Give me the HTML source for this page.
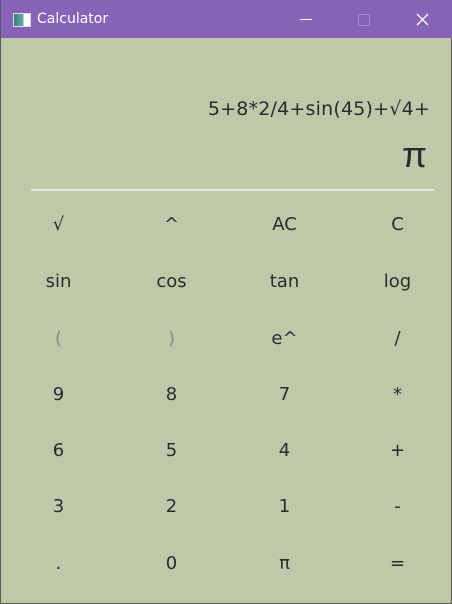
<!DOCTYPE html>
<html><head><style>
html,body{margin:0;padding:0}
body{width:452px;height:604px;background:#bfc9a9;position:relative;overflow:hidden;font-family:"DejaVu Sans","Liberation Sans",sans-serif;box-sizing:border-box;border:1px solid #5a5a5a;border-top:none}
.tb{position:absolute;left:0;top:0;width:452px;height:38px;background:#8763b8;color:#fff}
.tb .t{position:absolute;left:36px;top:11px;font-size:14px}
.ic{position:absolute;left:12px;top:13px;width:16px;height:12px;background:linear-gradient(90deg,#3a7a8a,#6ab0a0 60%,#fff 60%);border:1px solid #ddd}
.b{position:absolute;width:113px;height:40px;text-align:center;line-height:40px;font-size:18px;color:#2b2b2b;transform:translate(-57px,-19px)}
.g{color:#858b78}
.e1{position:absolute;right:21px;top:98px;font-size:19px;letter-spacing:0.2px;color:#2b2b2b}
.e2{position:absolute;right:24px;top:134px;font-size:36px;font-family:"Liberation Sans",sans-serif;color:#2b2b2b}
.ln{position:absolute;left:30px;top:189px;width:403px;height:2px;background:#e6e8e0}
</style></head><body>
<div class="tb"><div class="ic"></div><div class="t">Calculator</div>
<div style="position:absolute;left:299px;top:19px;width:12px;height:1px;background:#fff"></div>
<div style="position:absolute;left:357px;top:14px;width:10px;height:10px;border:1px solid #a58ad0"></div>
<svg style="position:absolute;left:415px;top:13px" width="13" height="13"><path d="M1 1L12 12M12 1L1 12" stroke="#fff" stroke-width="1.3"/></svg>
</div>
<div class="e1">5+8*2/4+sin(45)+√4+</div>
<div class="e2">π</div>
<div class="ln"></div>
<div class="b" style="left:58px;top:224px">√</div><div class="b" style="left:171px;top:224px">^</div><div class="b" style="left:284px;top:224px">AC</div><div class="b" style="left:397px;top:224px">C</div>
<div class="b" style="left:58px;top:281px">sin</div><div class="b" style="left:171px;top:281px">cos</div><div class="b" style="left:284px;top:281px">tan</div><div class="b" style="left:397px;top:281px">log</div>
<div class="b g" style="left:58px;top:338px">(</div><div class="b g" style="left:171px;top:338px">)</div><div class="b" style="left:284px;top:338px">e^</div><div class="b" style="left:397px;top:338px">/</div>
<div class="b" style="left:58px;top:394px">9</div><div class="b" style="left:171px;top:394px">8</div><div class="b" style="left:284px;top:394px">7</div><div class="b" style="left:397px;top:394px">*</div>
<div class="b" style="left:58px;top:450px">6</div><div class="b" style="left:171px;top:450px">5</div><div class="b" style="left:284px;top:450px">4</div><div class="b" style="left:397px;top:450px">+</div>
<div class="b" style="left:58px;top:506px">3</div><div class="b" style="left:171px;top:506px">2</div><div class="b" style="left:284px;top:506px">1</div><div class="b" style="left:397px;top:506px">-</div>
<div class="b" style="left:58px;top:563px">.</div><div class="b" style="left:171px;top:563px">0</div><div class="b" style="left:284px;top:563px">π</div><div class="b" style="left:397px;top:563px">=</div>
</body></html>
